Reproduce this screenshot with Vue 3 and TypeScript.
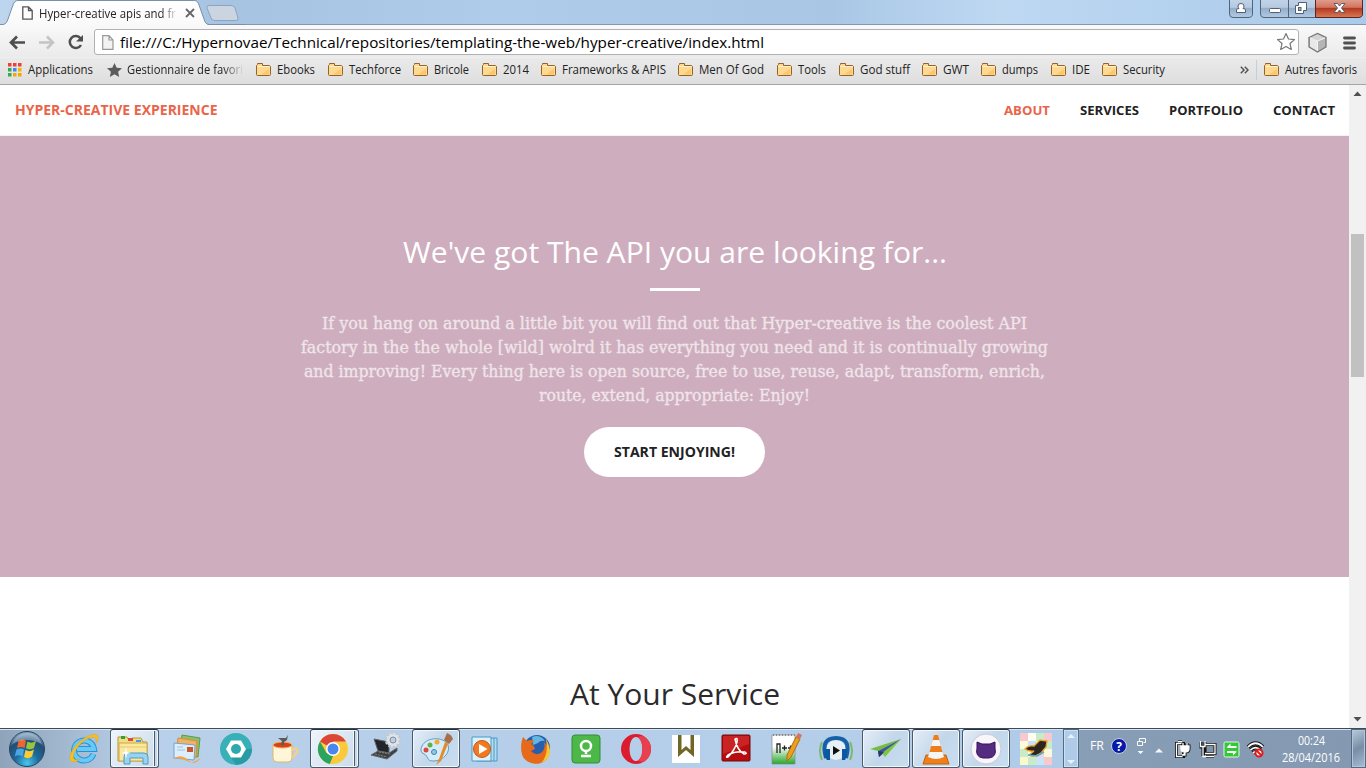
<script setup lang="ts">
import { h, type FunctionalComponent } from 'vue'

interface FitProps { text: string; w: number; size?: number; height?: number; base?: number }

// A single line of text set to an exact advance width.
const FitText: FunctionalComponent<FitProps> = (p) => {
  const height = p.height ?? 18
  return h('svg', { width: p.w, height, style: { display: 'block', overflow: 'visible', flex: 'none' } }, [
    h('text', {
      x: 0, y: p.base ?? 13, 'font-size': p.size ?? 12, fill: 'currentColor',
      textLength: p.w, lengthAdjust: 'spacingAndGlyphs',
    }, p.text),
  ])
}
FitText.props = ['text', 'w', 'size', 'height', 'base']

interface Bookmark { label: string; text: number; cell: number }
const bookmarks: Bookmark[] = [
  { label: 'Ebooks', text: 38, cell: 72 },
  { label: 'Techforce', text: 52, cell: 85 },
  { label: 'Bricole', text: 35, cell: 69 },
  { label: '2014', text: 26, cell: 59 },
  { label: 'Frameworks & APIS', text: 104, cell: 137 },
  { label: 'Men Of God', text: 65, cell: 99 },
  { label: 'Tools', text: 28, cell: 62 },
  { label: 'God stuff', text: 50, cell: 83 },
  { label: 'GWT', text: 26, cell: 59 },
  { label: 'dumps', text: 36, cell: 70 },
  { label: 'IDE', text: 18, cell: 51 },
  { label: 'Security', text: 42, cell: 64 },
]
const appDots = ['#ea4335', '#ea4335', '#ea4335', '#34a853', '#4285f4', '#f4b400', '#34a853', '#f4a800', '#f4a800']
const links = [
  { label: 'ABOUT', w: 46 },
  { label: 'SERVICES', w: 59 },
  { label: 'PORTFOLIO', w: 74 },
  { label: 'CONTACT', w: 62 },
]
const lines = [
  { t: 'If you hang on around a little bit you will find out that Hyper-creative is the coolest API', w: 705 },
  { t: 'factory in the the whole [wild] wolrd it has everything you need and it is continually growing', w: 747 },
  { t: 'and improving! Every thing here is open source, free to use, reuse, adapt, transform, enrich,', w: 741 },
  { t: 'route, extend, appropriate: Enjoy!', w: 271 },
]
const mosaic = ['#f8c8cc', '#fdfdf0', '#c8ecc8', '#f8c8cc', '#fbfbdc', '#c8e4f8', '#fbf8cc', '#c8ecc8', '#c8ecc8', '#fbfbe8', '#f8d0d0', '#fbfbdc', '#fbf8cc', '#c8ecc8', '#c8e4f8', '#f8c8cc']
</script>

<template>
  <div class="screen">
    <header class="chrome">
      <div class="titlebar">
        <svg class="tabshape" width="246" height="26" viewBox="0 0 246 26">
          <defs>
            <linearGradient id="tabfill" x1="0" y1="0" x2="0" y2="1"><stop offset="0" stop-color="#fff" /><stop offset="1" stop-color="#f9f9f9" /></linearGradient>
          </defs>
          <path d="M0 26V24.500H3C6 24 7 22 8 19L13 5C14 2 15.500 .5 18 .5H194C197 .5 198 2 199 5L204 19C205 22 206 24.500 209 24.500H246V26Z" fill="url(#tabfill)" />
          <path d="M0 24.500H3C6 24 7 22 8 19L13 5C14 2 15.500 .5 18 .5H194C197 .5 198 2 199 5L204 19C205 22 206 24.500 209 24.500H246" fill="none" stroke="#7890aa" />
          <path d="M209 5.500H231Q234 5.500 235 8L238 18Q239 20.500 236 20.500H215Q212 20.500 211 18L207 8Q206 5.500 209 5.500Z" fill="#cbd5e1" stroke="#8da4be" />
        </svg>
        <div class="tab">
          <svg width="11" height="14" viewBox="0 0 11 14"><path d="M.8.8H6.500L10.200 4.500V13.200H.8ZM6.500.8V4.500H10.200" fill="#fff" stroke="#555" stroke-width="1.300" /></svg>
          <div class="tabtext"><FitText text="Hyper-creative apis and fr" :w="137" /></div>
          <svg width="10" height="10" viewBox="0 0 10 10"><path d="M1 1L9 9M9 1L1 9" stroke="#666" stroke-width="1.800" /></svg>
        </div>
        <svg class="winbtns" width="138" height="19" viewBox="0 0 138 19">
          <defs>
            <linearGradient id="glass" x1="0" y1="0" x2="0" y2="1"><stop offset="0" stop-color="#c3d4e8" /><stop offset=".45" stop-color="#b6c9df" /><stop offset=".5" stop-color="#94aeca" /><stop offset="1" stop-color="#b1cbe6" /></linearGradient>
            <linearGradient id="redglass" x1="0" y1="0" x2="0" y2="1"><stop offset="0" stop-color="#e2a192" /><stop offset=".45" stop-color="#cf765f" /><stop offset=".5" stop-color="#b63720" /><stop offset="1" stop-color="#d97b55" /></linearGradient>
          </defs>
          <path d="M1.500 -1V14Q1.500 17.500 5 17.500H20Q24.500 17.500 24.500 14V-1Z" fill="url(#glass)" stroke="#52647b" />
          <path d="M32.500 -1V14Q32.500 17.500 36 17.500H87.500V-1Z" fill="url(#glass)" stroke="#52647b" />
          <path d="M60.500 0V17" stroke="#52647b" />
          <path d="M87.500 -1V17.500H130Q134.500 17.500 134.500 14V-1Z" fill="url(#redglass)" stroke="#5e2420" />
          <g fill="#fff" stroke="#53606f">
            <path d="M8.500 12.500V10Q8.500 8.500 11 8.500Q10 7.500 10 6Q10 3.500 13 3.500Q16 3.500 16 6Q16 7.500 15 8.500Q17.500 8.500 17.500 10V12.500Z" />
            <rect x="41.500" y="8.500" width="11" height="4" rx="1" />
            <path d="M70.500 2.500H78.500V10.500H75.500V13.500H67.500V5.500H70.500Z" />
            <rect x="70.500" y="7.500" width="2.500" height="3" fill="#9ab0c8" />
            <path d="M106 3.500H109.500L111.500 6L113.500 3.500H117L113.500 8L117 12.500H113.500L111.500 10L109.500 12.500H106L109.500 8Z" />
          </g>
        </svg>
      </div>
      <div class="toolbar">
        <svg class="navicons" width="94" height="32" viewBox="0 0 94 32">
          <path d="M25 17.500H11.500M17 11.500L11 17.500L17 23.500" fill="none" stroke="#4e4e4e" stroke-width="2.700" />
          <path d="M39 17.500H52.500M47 11.500L53 17.500L47 23.500" fill="none" stroke="#c4c4c4" stroke-width="2.500" />
          <path d="M80.500 13.300A6 6 0 1 0 81 20" fill="none" stroke="#4e4e4e" stroke-width="2.500" />
          <path d="M83 10V16.500H76Z" fill="#4e4e4e" />
        </svg>
        <div class="urlbar">
          <svg width="12" height="15" viewBox="0 0 12 15"><path d="M.7.7H7L11 5V14.300H.7ZM7 .7V5H11" fill="#f3f3f3" stroke="#999" stroke-width="1.200" /></svg>
          <FitText class="url" text="file:///C:/Hypernovae/Technical/repositories/templating-the-web/hyper-creative/index.html" :w="644" :size="15" :height="20" :base="16" />
          <svg class="bookstar" width="20" height="20" viewBox="0 0 20 20"><path d="M10 1.500L12.500 7L18.500 7.600L14 11.500L15.300 17.500L10 14.500L4.700 17.500L6 11.500L1.500 7.600L7.500 7Z" fill="#fff" stroke="#777" stroke-width="1.200" stroke-linejoin="round" /></svg>
        </div>
        <svg class="ext" width="60" height="28" viewBox="0 0 60 28">
          <path d="M9 8.500L17.500 4.500L26 8.500V18L17.500 23L9 18Z" fill="#b5b5b5" stroke="#777" stroke-width="1.300" />
          <path d="M10 9.500L17.500 12V22L10 17.500Z" fill="#e9e9e9" /><path d="M10 9L17.500 5.300L25 9L17.500 12Z" fill="#d3d3d3" /><path d="M17.500 12V22M10 9L17.500 12L25 9" fill="none" stroke="#f5f5f5" />
          <path d="M44.500 9H54.500M44.500 14H54.500M44.500 19H54.500" stroke="#505050" stroke-width="2.800" stroke-linecap="round" />
        </svg>
      </div>
      <nav class="bookmarks">
        <div class="apps">
          <svg width="14" height="14" viewBox="0 0 14 14"><rect v-for="(c, i) in appDots" :key="i" :x="(i % 3) * 5" :y="Math.floor(i / 3) * 5" width="3.500" height="3.500" :fill="c" /></svg>
          <FitText text="Applications" :w="65" />
        </div>
        <div class="manager">
          <svg width="15" height="14" viewBox="0 0 15 14"><path d="M7.500 0L9.700 4.700L15 5.300L11.100 8.700L12.200 14L7.500 11.300L2.800 14L3.900 8.700L0 5.300L5.300 4.700Z" fill="#5b5b5b" /></svg>
          <div class="fade"><FitText text="Gestionnaire de favori" :w="116" /></div>
        </div>
        <div v-for="b in bookmarks" :key="b.label" class="mark" :style="{ width: b.cell + 'px' }">
          <svg width="16" height="14" viewBox="0 0 16 14"><path d="M.5 11.500V2.500L1.500 1.500V.5H6.500V2.500H13.500L14.500 3.500V11.500Q14.500 12.500 13.500 12.500H1.500Q.5 12.500.5 11.500Z" fill="#ffd98f" stroke="#8f642e" /><path d="M1.500 3.500H13.500" stroke="#fff0c9" /><path d="M13 6V11.500H5Z" fill="#fbc66c" /></svg>
          <FitText :text="b.label" :w="b.text" />
        </div>
        <div class="others">
          <svg width="9" height="8" viewBox="0 0 9 8"><path d="M.8.8L4 4L.8 7.200M4.800.8L8 4L4.800 7.200" fill="none" stroke="#555" stroke-width="1.500" /></svg>
          <span class="divider"></span>
          <svg width="16" height="14" viewBox="0 0 16 14"><path d="M.5 11.500V2.500L1.500 1.500V.5H6.500V2.500H13.500L14.500 3.500V11.500Q14.500 12.500 13.500 12.500H1.500Q.5 12.500.5 11.500Z" fill="#ffd98f" stroke="#8f642e" /><path d="M1.500 3.500H13.500" stroke="#fff0c9" /><path d="M13 6V11.500H5Z" fill="#fbc66c" /></svg>
          <FitText text="Autres favoris" :w="72" />
        </div>
      </nav>
    </header>

    <div class="viewport">
      <main class="page">
        <div class="navbar">
          <FitText class="brand" text="HYPER-CREATIVE EXPERIENCE" :w="202.500" :size="14" :height="20" :base="15" />
          <div class="links">
            <FitText v-for="(l, i) in links" :key="l.label" :class="{ active: i === 0 }" :text="l.label" :w="l.w" :size="13" :height="20" :base="15" />
          </div>
        </div>
        <section class="hero">
          <FitText class="heading" text="We've got The API you are looking for..." :w="544" :size="30" :height="34" :base="27" />
          <div class="rule"></div>
          <div class="copy">
            <FitText v-for="l in lines" :key="l.w" :text="l.t" :w="l.w" :size="16" :height="24" :base="18" />
          </div>
          <button class="cta"><FitText text="START ENJOYING!" :w="121" :size="14" :height="20" :base="15" /></button>
        </section>
        <section class="service">
          <FitText text="At Your Service" :w="210" :size="30" :height="34" :base="27" />
        </section>
      </main>
      <div class="scrollbar">
        <svg width="17" height="16" viewBox="0 0 17 16"><path d="M4.500 11L8.500 6.500L12.500 11Z" fill="#505050" /></svg>
        <div class="thumb"></div>
        <svg width="17" height="17" viewBox="0 0 17 17"><path d="M4.500 6L8.500 10.500L12.500 6Z" fill="#505050" /></svg>
      </div>
    </div>

    <footer class="taskbar">
      <div class="start">
        <svg width="38" height="38" viewBox="0 0 38 38">
          <defs><radialGradient id="orb" cx=".5" cy=".9" r=".85"><stop offset="0" stop-color="#49c7ed" /><stop offset=".4" stop-color="#1d6a9c" /><stop offset=".75" stop-color="#234e74" /><stop offset="1" stop-color="#7da2bd" /></radialGradient></defs>
          <circle cx="19" cy="19" r="17.500" fill="url(#orb)" stroke="#29455f" />
          <path d="M10.500 11Q15 8 18 11L16.500 18Q13 16 9 18Z" fill="#f0652c" /><path d="M19.500 11.500Q23 14 28 11L26 18Q21.500 20.500 18 18Z" fill="#93c83d" />
          <path d="M8.500 19.500Q12.500 17.500 16 19.500L14.500 26.500Q10.500 24 6.800 26.500Z" fill="#4aa5e5" /><path d="M17.500 20Q21.500 22.500 26 19.500L24 26.500Q20 29.500 16 27Z" fill="#ffcb2e" />
          <path d="M4 14Q9 3 19 3Q30 3 34 14Q19 6 4 14Z" fill="#fff" opacity=".3" />
        </svg>
      </div>
      <!-- Internet Explorer -->
      <div class="cell ie"><svg width="32" height="32" viewBox="0 0 32 32"><path d="M25.500 21A10 10 0 1 1 26 16H9" fill="none" stroke="#2b91d3" stroke-width="6" /><path d="M25.500 21A10 10 0 1 1 26 16H9" fill="none" stroke="#67c9f5" stroke-width="4" /><path d="M5 29C-4 27 8 7 23 2C32 -1 31 6 28 10C29 5 27 3 21 5C11 9 3 22 6 26Q8 28 12 26Q8 29 5 29Z" fill="#f8bf25" stroke="#dfa31a" stroke-width=".5" /></svg></div>
      <!-- Explorer -->
      <div class="cell open stack"><svg width="34" height="32" viewBox="0 0 34 32"><path d="M2 4H11L13 7H16V5H25L27 9H31V28H2Z" fill="#f5dc82" stroke="#b99639" /><path d="M3 10H31V28H3Z" fill="#fae8a0" stroke="#c9a84b" /><path d="M3 14H31" stroke="#e8c969" /><path d="M5 3H9V6H5Z" fill="#2ba335" /><path d="M12 5H17V8H12Z" fill="#df4a37" /><path d="M20 7H25V9H20Z" fill="#3ba0e5" /><path d="M8 31V24Q8 20 12 20H28Q32 20 32 24V31H27V25H14V31Z" fill="#9cd2ee" stroke="#4b9dc9" /><path d="M10 14L11 19L15 20L11 21L10 26L9 21L5 20L9 19Z" fill="#fff" /></svg></div>
      <!-- Mail -->
      <div class="cell"><svg width="32" height="32" viewBox="0 0 32 32"><path d="M12 2L30 5L28 24L10 18Z" fill="#8fbd70" stroke="#5d9a4a" /><path d="M8 5L27 8L26 25L6 20Z" fill="#f1b264" stroke="#d98f36" /><path d="M4 10L25 12L24 27L4 25Z" fill="#dceefb" stroke="#6ea6d3" /><path d="M7 14H13M7 17H15" stroke="#9cc2e0" /><rect x="17" y="14" width="6" height="5" fill="#c9552e" /><path d="M2 26Q11 20 18 27T31 24Q23 32 17 28T2 26Z" fill="#f6a443" /></svg></div>
      <div class="cell"><svg width="34" height="34" viewBox="0 0 34 34"><circle cx="17" cy="17" r="16" fill="#37b0b7" /><path d="M27 17L33 17A16 16 0 0 1 17 33L12 25.500Z" fill="#289ba5" /><path d="M12 8.500H22L27 17L22 25.500H12L7 17Z" fill="#fff" /><circle cx="17" cy="17" r="5" fill="#31a8b0" /></svg></div>
      <div class="cell"><svg width="32" height="32" viewBox="0 0 32 32"><path d="M3 12H22V25Q22 29 18 29H7Q3 29 3 25Z" fill="#fff6da" stroke="#e0b767" /><path d="M22 17Q28 13 27 19Q26 22 22 24" fill="none" stroke="#f2cf8a" stroke-width="2.500" /><ellipse cx="12.500" cy="12" rx="9.500" ry="3" fill="#d9401e" stroke="#eeb555" /><path d="M11 12L12 8L8 5L16 5L18 2L17 7L14 9V12Z" fill="#5d5a58" /></svg></div>
      <!-- Chrome -->
      <div class="cell open stack"><svg width="32" height="32" viewBox="0 0 32 32"><circle cx="16" cy="16" r="15" fill="#fbca3c" /><path d="M16 16L3 8.500A15 15 0 0 1 29 8.500H16Z" fill="#dc4638" /><path d="M3 8.500L9.500 20L16 23L13 31A15 15 0 0 1 3 8.500Z" fill="#2da45d" /><path d="M22.500 20L16 31L13 31L17 22Z" fill="#fbca3c" /><circle cx="16" cy="16" r="7" fill="#fff" /><circle cx="16" cy="16" r="5.500" fill="#4a87ed" /></svg></div>
      <div class="cell"><svg class="raised" width="32" height="32" viewBox="0 0 32 32"><path d="M4 9L19 12V23L8 21Z" fill="#222529" stroke="#666" /><path d="M8 21L19 23L27 18V21L17 29L1 25Z" fill="#3c3e42" stroke="#66686c" /><path d="M5 24L17 27M9 22L20 24" stroke="#888" stroke-dasharray="2 1" /><circle cx="23" cy="10" r="5" fill="none" stroke="#e0e4e9" stroke-width="4" /><circle cx="23" cy="10" r="7" fill="none" stroke="#c3c9d0" stroke-width="2.500" stroke-dasharray="2.400 2" /><circle cx="23" cy="10" r="3" fill="none" stroke="#848c96" /></svg></div>
      <!-- Paint -->
      <div class="cell open"><svg width="34" height="34" viewBox="0 0 34 34"><path d="M3 14C7 6 21 4 28 11C33 19 25 29 14 29C7 29 10 24 5 22Q0 20 3 14Z" fill="#d6edf8" stroke="#5f9dc1" /><circle cx="11" cy="13" r="2.500" fill="#61b148" /><circle cx="7" cy="18" r="2.500" fill="#dc473b" /><circle cx="15" cy="20" r="2.500" fill="#91c9e7" stroke="#3c85ac" /><circle cx="18" cy="10" r="2.500" fill="#f3a83c" /><path d="M26 10L29 12L22 29L17 33L20 27Z" fill="#e58b2d" /><path d="M25 8L28 1Q33 3 34 7L30 12Z" fill="#a97048" /></svg></div>
      <!-- Media player -->
      <div class="cell"><svg width="32" height="32" viewBox="0 0 32 32"><path d="M7 5H27V28H7Z" fill="#b4dced" stroke="#499ac7" /><path d="M2 4H21V28H2Z" fill="#dcf1fa" stroke="#499ac7" /><path d="M24 5V28" stroke="#499ac7" /><circle cx="12" cy="16" r="8.500" fill="#f37921" stroke="#c45a17" /><path d="M9 11L17.500 16L9 21Z" fill="#fff" /></svg></div>
      <!-- Firefox -->
      <div class="cell"><svg width="32" height="32" viewBox="0 0 32 32"><circle cx="17" cy="15" r="13" fill="#275fae" /><path d="M12 4Q20 1 25 8Q20 7 18 10L13 12Z" fill="#62b6df" /><path d="M3 4L7 8Q11 6 14 8L11 11Q14 12 15 16L11 18Q15 23 21 20Q26 16 24 9Q32 18 28 24C23 34 8 32 3 24C0 17 1 9 3 4Z" fill="#e66a19" /><path d="M26 6Q36 24 21 30Q29 22 26 6Z" fill="#fac531" /></svg></div>
      <div class="cell"><svg width="30" height="30" viewBox="0 0 30 30"><rect x="1" y="1" width="28" height="28" rx="3" fill="#4bb847" stroke="#338e36" /><circle cx="15" cy="12" r="5" fill="none" stroke="#fff" stroke-width="2.500" /><path d="M15 17V20M10 22H20" stroke="#fff" stroke-width="2.500" /></svg></div>
      <!-- Opera -->
      <div class="cell"><svg width="32" height="32" viewBox="0 0 32 32"><path fill-rule="evenodd" d="M16 1A15 15 0 1 0 16 31A15 15 0 1 0 16 1ZM16 4C7.500 4 7.500 28 16 28C24.500 28 24.500 4 16 4Z" fill="#dd1b2e" /><path d="M18 4.500Q22 1.500 26 5Q31 9 31 16Q31 23 26 27Q22 30.500 18 27.500Q22.500 24 22.500 16Q22.500 8 18 4.500Z" fill="#e8404e" /></svg></div>
      <div class="cell"><svg width="28" height="28" viewBox="0 0 28 28"><rect width="28" height="28" fill="#fff" /><path d="M6 0V22L14 15L22 22V0H18.500V15L14 11L9.500 15V0Z" fill="#706626" /></svg></div>
      <!-- Acrobat -->
      <div class="cell"><svg width="30" height="30" viewBox="0 0 30 30"><rect x="1" y="1" width="28" height="26" rx="1" fill="#b80d10" stroke="#760909" /><path d="M2 2H28V10L2 20Z" fill="#d93b35" opacity=".5" /><path d="M14 5Q17 3 16 8Q14 16 7 23Q4 24 7 21Q14 17 24 18Q27 20 23 20Q16 16 14 5Z" fill="none" stroke="#fff" stroke-width="1.500" /></svg></div>
      <!-- Notepad++ -->
      <div class="cell"><svg width="32" height="32" viewBox="0 0 32 32"><defs><linearGradient id="note" x1="0" y1="0" x2="0" y2="1"><stop stop-color="#fff" offset=".4" /><stop stop-color="#25a72a" offset="1" /></linearGradient></defs><path d="M2 2H25V31H2Z" fill="url(#note)" stroke="#888" stroke-width=".7" /><path d="M3 2H25" stroke="#888" stroke-width="2" stroke-dasharray="1 2" /><path d="M7 20V11H10V20M12 15H17M14.500 12.500V17.500M18 15H23M20.500 12.500V17.500" fill="none" stroke="#222" stroke-width="1.300" /><path d="M26 4L30 6L21 24L17 28V22Z" fill="#e9a11d" stroke="#b36a12" /><path d="M26 4L28 0L32 2L30 6Z" fill="#d8745a" /></svg></div>
      <div class="cell"><svg width="34" height="32" viewBox="0 0 34 32"><circle cx="17" cy="17" r="10" fill="#e6f0f5" /><path d="M7 25Q1 5 17 5T27 25" fill="none" stroke="#1461a8" stroke-width="4" /><path d="M6 16H11V27H8L5 23ZM23 16H28V23L26 27H23Z" fill="#0c58a0" /><path d="M3 9Q-1 18 3 27M31 9Q35 18 31 27" fill="none" stroke="#81b96c" stroke-width="2" /><path d="M14 13L21 17.500L14 22Z" fill="#111" /></svg></div>
      <div class="cell open"><svg width="34" height="32" viewBox="0 0 34 32"><path d="M32 6L1 16L9 18Z" fill="#71bf3b" /><path d="M32 6L9 18L10 24Z" fill="#44549f" /><path d="M32 6L16 24L13 20Z" fill="#7ac83c" /><path d="M9 18L10 24L15 19Z" fill="#29366f" /></svg></div>
      <!-- VLC -->
      <div class="cell open"><svg width="30" height="34" viewBox="0 0 30 34"><path d="M5 23H25L28 32H2Z" fill="#ed8018" stroke="#c9600b" /><path d="M13 3H17L23 26Q15 29 7 26Z" fill="#ef7d1a" /><path d="M11.700 8H18.300L20 14H10ZM8.500 20H21.500L23 25Q15 29 7 25Z" fill="#f5f5f3" /></svg></div>
      <!-- GitHub -->
      <div class="cell open"><svg width="32" height="32" viewBox="0 0 32 32"><circle cx="16" cy="16" r="15" fill="#f8f6fb" stroke="#cdc7d8" /><path d="M7 9L12 11H20L25 9V15Q27 24 19 25H13Q5 24 7 15Z" fill="#552b82" stroke="#35145d" /></svg></div>
      <div class="cell"><svg width="32" height="32" viewBox="0 0 32 32"><rect v-for="(c, i) in mosaic" :key="i" :x="(i % 4) * 8" :y="Math.floor(i / 4) * 8" width="8" height="8" :fill="c" /><path d="M5 16Q8 12 14 13L20 7L27 8L26 14L21 20Q13 25 9 22L14 18Q9 19 5 16Z" fill="#2b2720" stroke="#f0a12a" stroke-width="1.300" /><path d="M8 22L17 23L24 19" fill="none" stroke="#55a8cf" stroke-width="1.500" /></svg></div>
      <div class="toolscroll"><svg width="16" height="38" viewBox="0 0 16 38"><path d="M4 8L8 4L12 8ZM4 30L8 34L12 30Z" fill="#e6f2fd" /></svg></div>
      <div class="tray">
        <FitText class="lang" text="FR" :w="14" />
        <svg class="help" width="18" height="18" viewBox="0 0 18 18"><circle cx="9" cy="9" r="7.500" fill="#0719a9" stroke="#c7d1dd" /><text x="9" y="13.500" text-anchor="middle" font-size="12" font-weight="700" fill="#fff">?</text></svg>
        <svg class="trayicons" width="132" height="32" viewBox="0 0 132 32">
          <path d="M4.500 3.500V.5H10.500V4.500H8.500M2.500 3.500H7.500V7.500H2.500Z" fill="none" stroke="#f7fafc" />
          <path d="M2.500 13H8.500L5.500 16ZM20 14.500L24 10.500L28 14.500Z" fill="#f7fafc" />
          <path d="M41.500 5.500H48.500V18.500H41.500ZM43 3.500H47" fill="#a6b2bf" stroke="#111" stroke-width="3" /><path d="M48 5.500H41.500V18.500H48M43 3.500H47" fill="none" stroke="#fff" stroke-width="1.300" /><path d="M46 8H54V11Q54 14 50 14V17H47M48 5V8M52 5V8" fill="none" stroke="#111" stroke-width="3" /><path d="M46 8H54V11Q54 14 50 14Q46 14 46 11ZM50 14V17H47M48 5V8M52 5V8" fill="#fff" stroke="#fff" stroke-width="1.300" />
          <path d="M70 6.500H80V15.500H70ZM71 18.500H79M66 4V9H70V4M68 9V18" fill="#7f92a7" stroke="#111" stroke-width="3" /><path d="M70 6.500H80V15.500H70M71 18.500H79M65.500 3V8.500H70V3M68 8V18.500H71" fill="none" stroke="#fff" stroke-width="1.300" />
          <rect x="89" y="4" width="15" height="15" rx="1.500" fill="#31c936" stroke="#e4f7e5" /><path d="M101.500 9H93M92 14H100.500" stroke="#fff" stroke-width="2" /><path d="M91.500 9.500L95.500 5.500V10ZM102 13.500L98 17.500V13Z" fill="#fff" />
          <path d="M113 9Q120.500 1.500 128 9M115.500 12Q120.500 7 125.500 12M118 15Q120.500 13 123 15" fill="none" stroke="#111" stroke-width="3.600" /><path d="M113 9Q120.500 1.500 128 9M115.500 12Q120.500 7 125.500 12M118 15Q120.500 13 123 15" fill="none" stroke="#fff" stroke-width="1.700" />
          <circle cx="124" cy="15" r="3.500" fill="#fff" stroke="#e11919" stroke-width="2" /><path d="M121.500 12.500L126.500 17.500" stroke="#e11919" stroke-width="2" />
        </svg>
        <div class="clock"><FitText text="00:24" :w="27" :height="17" /><FitText text="28/04/2016" :w="58" :height="17" /></div>
        <div class="desktop"></div>
      </div>
    </footer>
  </div>
</template>

<style>
body { margin: 0; overflow: hidden; }
</style>
<style scoped>
.screen { width: 1366px; height: 768px; display: flex; flex-direction: column; overflow: hidden; background: #fff; font-family: "Open Sans", "Noto Sans", sans-serif; }
.screen svg { flex: none; display: block; }
.chrome { height: 85px; box-sizing: border-box; border-bottom: 1px solid #a5a5a5; background: linear-gradient(#f9f9f9 25px, #dedede 84px); color: #222; }
.titlebar { height: 25px; display: flex; background: linear-gradient(90deg, #bdd5ee 0, #a6c3e2 230px, #afcdea 500px, #a9c7e5 830px, #bed8f2 1000px, #a9cae9 1366px); box-shadow: inset 0 -1px #8198b1; position: relative; }
.tabshape { margin-bottom: -1px; }
.tab { position: absolute; left: 22px; top: 3px; height: 20px; display: flex; align-items: center; }
.tabtext { width: 139px; margin: 2px 7px 0 6px; mask-image: linear-gradient(90deg, #000 88%, transparent); }
.winbtns { margin-left: auto; }
.toolbar { height: 32px; display: flex; }
.urlbar { width: 1205px; height: 26px; box-sizing: border-box; margin-top: 4px; border: 1px solid #b2b2b2; border-radius: 3px; background: #fff; display: flex; align-items: center; padding: 0 2px 0 7px; }
.url { margin-left: 6px; color: #000; }
.bookstar { margin-left: auto; }
.ext { margin: 4px 0 0 1px; }
.bookmarks { height: 26px; display: flex; align-items: center; padding-left: 8px; box-shadow: inset 0 1px #eee; }
.apps { width: 99px; display: flex; align-items: center; gap: 6px; }
.manager { width: 149px; display: flex; align-items: center; gap: 5px; }
.fade { width: 117px; mask-image: linear-gradient(90deg, #000 82%, transparent 100%); }
.mark { flex: none; display: flex; align-items: center; gap: 5px; }
.others { margin-left: auto; padding-right: 9px; display: flex; align-items: center; gap: 5px; }
.divider { width: 1px; height: 20px; margin: 0 2px; background: #bfd0de; }
.viewport { height: 643px; display: flex; }
.page { width: 1349px; overflow: hidden; }
.navbar { height: 51px; box-sizing: border-box; border-bottom: 1px solid #f2f2f2; padding: 0 14.500px 0 15px; display: flex; align-items: center; justify-content: space-between; font-weight: 700; color: #222; }
.brand, .links .active { color: #ea6449; }
.links { display: flex; gap: 30px; }
.hero { height: 441px; background: #ceaebe; color: #fff; display: flex; flex-direction: column; align-items: center; }
.heading { margin-top: 100px; }
.rule { width: 50px; height: 3px; background: #fff; margin: 18px 0 20px; }
.copy { display: flex; flex-direction: column; align-items: center; color: #f0e5ea; font-family: "DejaVu Serif Condensed", "DejaVu Serif", serif; font-stretch: condensed; stroke: #f0e5ea; stroke-width: .3px; }
.cta { width: 181px; height: 50px; border: 0; border-radius: 25px; margin-top: 20px; padding: 0; background: #fff; color: #222; display: flex; align-items: center; justify-content: center; font: 700 14px "Open Sans", sans-serif; }
.service { display: flex; justify-content: center; padding-top: 101px; color: #2b2b2b; }
.scrollbar { width: 17px; background: #f1f1f1; display: flex; flex-direction: column; justify-content: space-between; }
.thumb { width: 13px; height: 143px; background: #c1c1c1; margin: 133px 2px auto; }
.taskbar { height: 40px; box-sizing: border-box; border-top: 1px solid #3c4a5a; display: flex; align-items: center; background: linear-gradient(90deg, #8fa4ba 0, #a2b8cf 65px, #b8d0ea 140px, #b4cde8 900px, #afcbe7 1063px, #879eb6 1081px, #8499b1 1366px); box-shadow: inset 0 1px #d9e7f5; }
.start { width: 61px; flex: none; padding-left: 8px; box-sizing: border-box; }
.cell { width: 50px; height: 39px; flex: none; box-sizing: border-box; display: flex; align-items: center; justify-content: center; }
.ie { padding-right: 5px; }
.open { width: 48px; margin: 0 1px; border: 1px solid #4a5b6e; border-top-color: #25303b; border-radius: 3px; background: linear-gradient(125deg, #e5eef7, #c3d7eb 50%, #c9ddf0); box-shadow: inset 0 0 0 1px #f1f7fd; }
.stack { width: 49px; margin: 0 2px 0 -1px; padding-right: 4px; background: linear-gradient(90deg, transparent 42px, #f1f7fd 42px 43px, #4a5b6e 43px 44px, #c6d9eb 44px), linear-gradient(125deg, #eef4fa, #c8daeb); }
.raised { margin-top: -5px; }
.toolscroll { width: 16px; height: 39px; margin-left: 2px; border: 1px solid #566a80; box-sizing: border-box; display: flex; justify-content: center; background: #afcbe7; box-shadow: inset 0 0 0 1px #cce0f3; }
.tray { flex: 1; height: 39px; display: flex; color: #fff; }
.lang { margin: 8px 0 0 11px; }
.help { margin: 8px 7px 0 6px; }
.trayicons { margin: 9px 0 0; }
.clock { margin: 3px 0 0 14px; width: 60px; display: flex; flex-direction: column; align-items: center; }
.desktop { width: 15px; height: 39px; box-sizing: border-box; margin-left: auto; border: 1px solid #536a80; background: linear-gradient(150deg, #b8c9da, #788ea7 50%, #a5bdd4); box-shadow: inset 0 0 0 1px #b3c5d7; }
</style>
